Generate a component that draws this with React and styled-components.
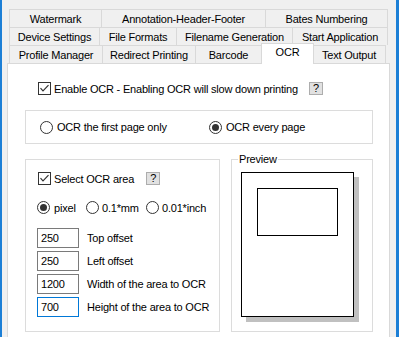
import React from 'react';
import styled, { createGlobalStyle } from 'styled-components';

const GlobalStyle = createGlobalStyle`
  html, body {
    margin: 0;
    padding: 0;
    background: #f0f0f0;
    overflow: hidden;
  }
  * {
    box-sizing: border-box;
  }
`;

const Window = styled.div`
  width: 399px;
  height: 337px;
  overflow: hidden;
  background: #f0f0f0;
  border-left: 2px solid #1c7fd6;
  border-right: 3px solid #1c7fd6;
  padding: 9px 0 0 5px;
  font-family: "Liberation Sans", Arial, sans-serif;
  font-size: 11px;
  letter-spacing: -0.2px;
  color: #000;
`;

const TabStrip = styled.div`
  display: flex;
  flex-direction: column;
  padding: 0 2px;
  width: 383px;
`;

const TabRow = styled.div`
  display: flex;
  align-items: flex-start;
  height: 18px;
`;

const Tab = styled.div`
  position: relative;
  width: ${props => props.$w}px;
  height: ${props => props.$active ? 21 : 18}px;
  margin-top: ${props => props.$active ? -2 : 0}px;
  margin-left: ${props => props.$active ? -1 : 0}px;
  margin-right: ${props => props.$active ? -1 : 0}px;
  padding-bottom: ${props => props.$active ? 4 : 0}px;
  display: flex;
  align-items: center;
  justify-content: center;
  white-space: nowrap;
  background: ${props => props.$active ? '#fff' : '#f0f0f0'};
  border-top: 1px solid #d9d9d9;
  border-right: 1px solid #d9d9d9;
  border-left: ${props => (props.$first || props.$active) ? '1px solid #d9d9d9' : 'none'};
  z-index: ${props => props.$active ? 2 : 1};
`;

const Panel = styled.div`
  width: 383px;
  height: 300px;
  background: #fff;
  border: 1px solid #d9d9d9;
  padding: 18px 16px 0 17px;
`;

const CheckRow = styled.div`
  display: flex;
  align-items: center;
  height: 13px;
  margin-left: ${props => props.$indent || 0}px;
`;

const Label = styled.span`
  margin-left: 3px;
  white-space: nowrap;
`;

const Help = styled.span`
  width: 14px;
  height: 13px;
  margin-left: ${props => props.$gap}px;
  border: 1px solid #adadad;
  background: #e1e1e1;
  display: flex;
  align-items: center;
  justify-content: center;
  font-size: 11px;
  line-height: 1;
`;

const GroupBox = styled.div`
  border: 1px solid #dcdcdc;
`;

const ModeBox = styled(GroupBox)`
  margin-top: 15px;
  height: 34px;
  display: flex;
  align-items: center;
  padding-left: 14px;
`;

const RadioItem = styled.label`
  display: flex;
  align-items: center;
  width: ${props => props.$w ? `${props.$w}px` : 'auto'};
  margin-right: ${props => props.$mr || 0}px;
  white-space: nowrap;
`;

const RadioText = styled.span`
  margin-left: ${props => props.$ml || 4}px;
`;

const LowerRow = styled.div`
  display: flex;
  gap: 11px;
  margin-top: 15px;
`;

const AreaBox = styled(GroupBox)`
  width: 195px;
  height: 173px;
  padding: 12px 0 0 12px;
`;

const UnitRow = styled.div`
  display: flex;
  align-items: center;
  height: 13px;
  margin: 16px 0 0 -1px;
`;

const Fields = styled.div`
  display: flex;
  flex-direction: column;
  gap: 3px;
  margin: 14px 0 0 -1px;
`;

const FieldRow = styled.div`
  display: flex;
  align-items: center;
  height: 20px;
`;

const NumberInput = styled.div`
  width: 42px;
  height: 20px;
  border: 1px solid ${props => props.$focused ? '#0078d7' : '#7a7a7a'};
  padding-left: 3px;
  display: flex;
  align-items: center;
  background: #fff;
`;

const FieldLabel = styled.span`
  margin-left: 8px;
  white-space: nowrap;
`;

const PreviewBox = styled(GroupBox)`
  position: relative;
  width: 142px;
  height: 173px;
  padding: 12px 0 0 9px;
`;

const Legend = styled.span`
  position: absolute;
  top: -7px;
  left: 6px;
  padding: 0 1px;
  background: #fff;
  line-height: 13px;
`;

function CheckBox() {
  return (
    <svg width="13" height="13" viewBox="0 0 13 13">
      <rect x="0.5" y="0.5" width="12" height="12" fill="#fff" stroke="#333" />
      <path d="M2.5 6.2 L5 8.8 L10.5 3.2" fill="none" stroke="#333" strokeWidth="1.2" />
    </svg>
  );
}

function Radio({ checked }) {
  return (
    <svg width="13" height="13" viewBox="0 0 13 13">
      <circle cx="6.5" cy="6.5" r="6" fill="#fff" stroke="#333" />
      {checked && <circle cx="6.5" cy="6.5" r="3.5" fill="#333" />}
    </svg>
  );
}

function PagePreview() {
  return (
    <svg width="119" height="151" viewBox="0 0 119 151">
      <rect x="5" y="5" width="113" height="145" fill="#c0c0c0" />
      <rect x="0.5" y="0.5" width="112" height="144" fill="#fff" stroke="#000" />
      <rect x="16.5" y="16.5" width="80" height="47" fill="#fff" stroke="#000" />
    </svg>
  );
}

const tabRows = [
  [['Watermark', 93], ['Annotation-Header-Footer', 164], ['Bates Numbering', 122]],
  [['Device Settings', 91], ['File Formats', 77], ['Filename Generation', 116], ['Start Application', 95]],
  [['Profile Manager', 94], ['Redirect Printing', 93], ['Barcode', 66], ['OCR', 53], ['Text Output', 73]],
];

const fields = [
  ['250', 'Top offset'],
  ['250', 'Left offset'],
  ['1200', 'Width of the area to OCR'],
  ['700', 'Height of the area to OCR'],
];

export default function App() {
  return (
    <>
      <GlobalStyle />
      <Window>
        <TabStrip>
          {tabRows.map((row, i) => (
            <TabRow key={i}>
              {row.map(([name, w], j) => (
                <Tab key={name} $w={w} $first={j === 0} $active={name === 'OCR'}>
                  {name}
                </Tab>
              ))}
            </TabRow>
          ))}
        </TabStrip>
        <Panel>
          <CheckRow $indent={13}>
            <CheckBox />
            <Label>Enable OCR - Enabling OCR will slow down printing</Label>
            <Help $gap={11}>?</Help>
          </CheckRow>

          <ModeBox>
            <RadioItem $w={169}>
              <Radio />
              <RadioText>OCR the first page only</RadioText>
            </RadioItem>
            <RadioItem>
              <Radio checked />
              <RadioText>OCR every page</RadioText>
            </RadioItem>
          </ModeBox>

          <LowerRow>
            <AreaBox>
              <CheckRow>
                <CheckBox />
                <Label>Select OCR area</Label>
                <Help $gap={12}>?</Help>
              </CheckRow>
              <UnitRow>
                <RadioItem $w={49}>
                  <Radio checked />
                  <RadioText>pixel</RadioText>
                </RadioItem>
                <RadioItem $w={60}>
                  <Radio />
                  <RadioText $ml={3}>0.1*mm</RadioText>
                </RadioItem>
                <RadioItem>
                  <Radio />
                  <RadioText $ml={3}>0.01*inch</RadioText>
                </RadioItem>
              </UnitRow>
              <Fields>
                {fields.map(([value, label], i) => (
                  <FieldRow key={label}>
                    <NumberInput $focused={i === fields.length - 1}>{value}</NumberInput>
                    <FieldLabel>{label}</FieldLabel>
                  </FieldRow>
                ))}
              </Fields>
            </AreaBox>

            <PreviewBox>
              <Legend>Preview</Legend>
              <PagePreview />
            </PreviewBox>
          </LowerRow>
        </Panel>
      </Window>
    </>
  );
}
